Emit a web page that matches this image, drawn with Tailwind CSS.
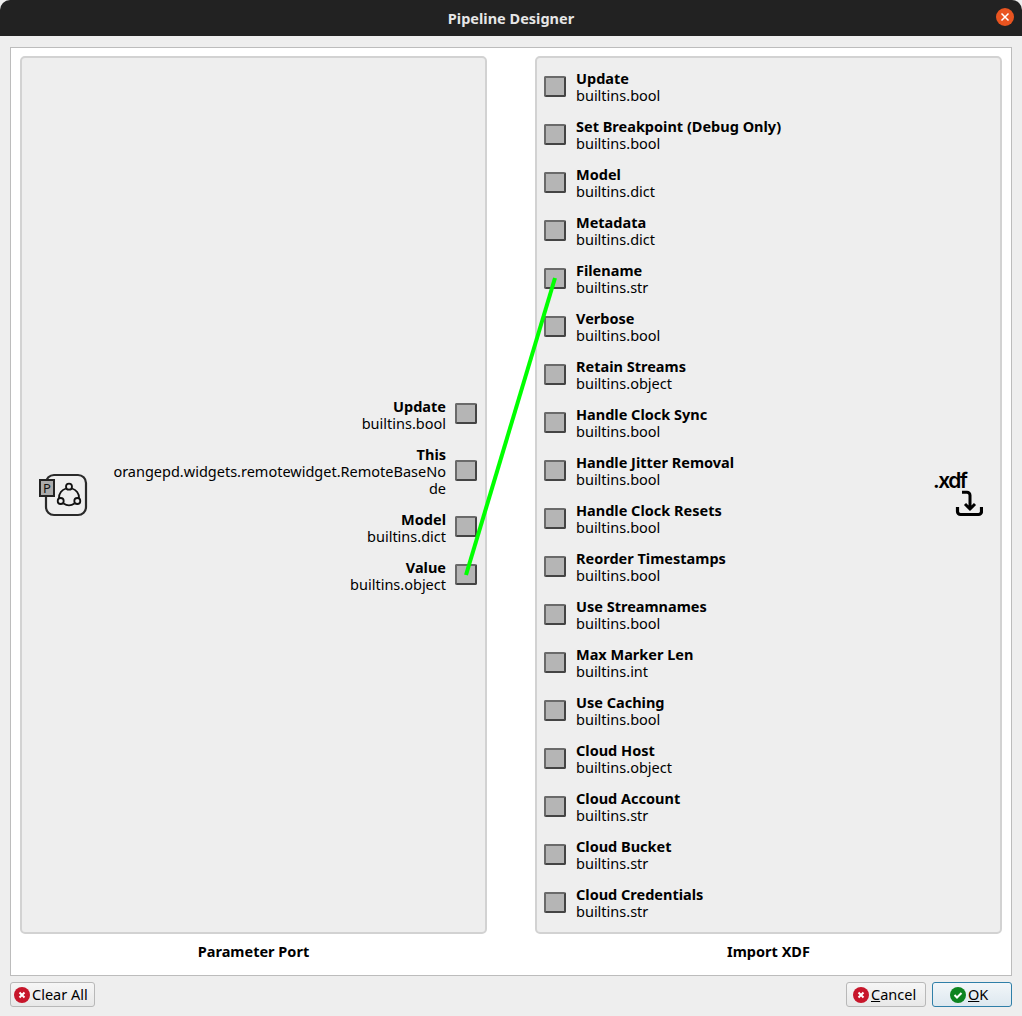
<!DOCTYPE html>
<html lang="en">
<head>
    <meta charset="UTF-8">
    <title>Pipeline Designer</title>
    <script src="https://cdn.jsdelivr.net/npm/@tailwindcss/browser@4"></script>
</head>
<body class="h-[1016px] w-[1022px] overflow-hidden bg-[#eeeeee] font-['Noto_Sans',sans-serif] text-[14.5px] leading-[17px] text-black">

    <!-- Title bar -->
    <header class="h-9 bg-[#222222] rounded-t-[10px] flex items-center justify-center relative">
        <span class="text-[#e6e6e6] font-bold text-[14.5px]">Pipeline Designer</span>
        <span class="absolute left-[996px] top-[8px] w-[18px] h-[18px] rounded-full bg-[#e95420] flex items-center justify-center">
            <svg width="10" height="10" viewBox="0 0 10 10"><path d="M1.500 1.500l7 7M8.500 1.500l-7 7" stroke="#fff" stroke-width="1.500"/></svg>
        </span>
    </header>

    <!-- Main frame -->
    <main class="relative ml-[10px] mt-[11px] w-[1002px] h-[929px] bg-white border border-[#bcbcbc] pt-[8px] pl-[9px]">
        <div class="flex gap-[48px]">

            <!-- Left node -->
            <section class="w-[467px]">
                <div class="h-[878px] bg-[#eeeeee] border-2 border-[#d2d2d2] rounded-[5px] flex items-center pl-[18px] pr-[8px]">
                    <svg width="48" height="44" viewBox="0 0 48 44" class="shrink-0 overflow-visible">
                        <rect x="6" y="2" width="40" height="40" rx="8" fill="none" stroke="#2a2a2a" stroke-width="2.200"/>
                        <path d="M26 15.500a9.500 9.500 0 0 0-7 9.500M32 15.500a9.500 9.500 0 0 1 7 9.500M23.500 30.500a9.500 9.500 0 0 0 11 0" fill="none" stroke="#111" stroke-width="1.800"/>
                        <circle cx="29" cy="13.700" r="3" fill="#eee" stroke="#111" stroke-width="1.800"/>
                        <circle cx="20.700" cy="28" r="3" fill="#eee" stroke="#111" stroke-width="1.800"/>
                        <circle cx="37.300" cy="28" r="3" fill="#eee" stroke="#111" stroke-width="1.800"/>
                        <rect x="0" y="7" width="14" height="16" fill="#aaaaaa" stroke="#222" stroke-width="2"/>
                        <text x="7" y="20" text-anchor="middle" font-size="13" fill="#111">P</text>
                    </svg>
                    <div class="flex-1 flex flex-col items-end">
                        <div class="h-12 flex items-center gap-[9px]">
                            <div class="text-right"><div class="font-bold">Update</div><div>builtins.bool</div></div>
                            <div class="w-[22px] h-[21px] mb-[2px] bg-[#b5b5b5] border-2 border-[#6a6a6a] border-b-[#444] border-r-[#444] rounded-[2px]"></div>
                        </div>
                        <div class="h-[65px] flex items-center gap-[9px]">
                            <div class="text-right"><div class="font-bold">This</div><div class="whitespace-nowrap">orangepd.widgets.remotewidget.RemoteBaseNo<br>de</div></div>
                            <div class="w-[22px] h-[21px] mb-[2px] bg-[#b5b5b5] border-2 border-[#6a6a6a] border-b-[#444] border-r-[#444] rounded-[2px]"></div>
                        </div>
                        <div class="h-12 flex items-center gap-[9px]">
                            <div class="text-right"><div class="font-bold">Model</div><div>builtins.dict</div></div>
                            <div class="w-[22px] h-[21px] mb-[2px] bg-[#b5b5b5] border-2 border-[#6a6a6a] border-b-[#444] border-r-[#444] rounded-[2px]"></div>
                        </div>
                        <div class="h-12 flex items-center gap-[9px]">
                            <div class="text-right"><div class="font-bold">Value</div><div>builtins.object</div></div>
                            <div class="w-[22px] h-[21px] mb-[2px] bg-[#b5b5b5] border-2 border-[#6a6a6a] border-b-[#444] border-r-[#444] rounded-[2px]"></div>
                        </div>
                    </div>
                </div>
                <div class="text-center font-bold mt-[9px]">Parameter Port</div>
            </section>

            <!-- Right node -->
            <section class="w-[467px]">
                <div class="h-[878px] bg-[#eeeeee] border-2 border-[#d2d2d2] rounded-[5px] flex items-center pl-[7px] pr-[17px]">
                    <div class="flex-1 flex flex-col">
                        <div class="h-12 flex items-center gap-[10px]">
                            <div class="w-[22px] h-[21px] mb-[2px] bg-[#b5b5b5] border-2 border-[#6a6a6a] border-b-[#444] border-r-[#444] rounded-[2px]"></div>
                            <div><div class="font-bold">Update</div><div>builtins.bool</div></div>
                        </div>
                        <div class="h-12 flex items-center gap-[10px]">
                            <div class="w-[22px] h-[21px] mb-[2px] bg-[#b5b5b5] border-2 border-[#6a6a6a] border-b-[#444] border-r-[#444] rounded-[2px]"></div>
                            <div><div class="font-bold">Set Breakpoint (Debug Only)</div><div>builtins.bool</div></div>
                        </div>
                        <div class="h-12 flex items-center gap-[10px]">
                            <div class="w-[22px] h-[21px] mb-[2px] bg-[#b5b5b5] border-2 border-[#6a6a6a] border-b-[#444] border-r-[#444] rounded-[2px]"></div>
                            <div><div class="font-bold">Model</div><div>builtins.dict</div></div>
                        </div>
                        <div class="h-12 flex items-center gap-[10px]">
                            <div class="w-[22px] h-[21px] mb-[2px] bg-[#b5b5b5] border-2 border-[#6a6a6a] border-b-[#444] border-r-[#444] rounded-[2px]"></div>
                            <div><div class="font-bold">Metadata</div><div>builtins.dict</div></div>
                        </div>
                        <div class="h-12 flex items-center gap-[10px]">
                            <div class="w-[22px] h-[21px] mb-[2px] bg-[#b5b5b5] border-2 border-[#6a6a6a] border-b-[#444] border-r-[#444] rounded-[2px]"></div>
                            <div><div class="font-bold">Filename</div><div>builtins.str</div></div>
                        </div>
                        <div class="h-12 flex items-center gap-[10px]">
                            <div class="w-[22px] h-[21px] mb-[2px] bg-[#b5b5b5] border-2 border-[#6a6a6a] border-b-[#444] border-r-[#444] rounded-[2px]"></div>
                            <div><div class="font-bold">Verbose</div><div>builtins.bool</div></div>
                        </div>
                        <div class="h-12 flex items-center gap-[10px]">
                            <div class="w-[22px] h-[21px] mb-[2px] bg-[#b5b5b5] border-2 border-[#6a6a6a] border-b-[#444] border-r-[#444] rounded-[2px]"></div>
                            <div><div class="font-bold">Retain Streams</div><div>builtins.object</div></div>
                        </div>
                        <div class="h-12 flex items-center gap-[10px]">
                            <div class="w-[22px] h-[21px] mb-[2px] bg-[#b5b5b5] border-2 border-[#6a6a6a] border-b-[#444] border-r-[#444] rounded-[2px]"></div>
                            <div><div class="font-bold">Handle Clock Sync</div><div>builtins.bool</div></div>
                        </div>
                        <div class="h-12 flex items-center gap-[10px]">
                            <div class="w-[22px] h-[21px] mb-[2px] bg-[#b5b5b5] border-2 border-[#6a6a6a] border-b-[#444] border-r-[#444] rounded-[2px]"></div>
                            <div><div class="font-bold">Handle Jitter Removal</div><div>builtins.bool</div></div>
                        </div>
                        <div class="h-12 flex items-center gap-[10px]">
                            <div class="w-[22px] h-[21px] mb-[2px] bg-[#b5b5b5] border-2 border-[#6a6a6a] border-b-[#444] border-r-[#444] rounded-[2px]"></div>
                            <div><div class="font-bold">Handle Clock Resets</div><div>builtins.bool</div></div>
                        </div>
                        <div class="h-12 flex items-center gap-[10px]">
                            <div class="w-[22px] h-[21px] mb-[2px] bg-[#b5b5b5] border-2 border-[#6a6a6a] border-b-[#444] border-r-[#444] rounded-[2px]"></div>
                            <div><div class="font-bold">Reorder Timestamps</div><div>builtins.bool</div></div>
                        </div>
                        <div class="h-12 flex items-center gap-[10px]">
                            <div class="w-[22px] h-[21px] mb-[2px] bg-[#b5b5b5] border-2 border-[#6a6a6a] border-b-[#444] border-r-[#444] rounded-[2px]"></div>
                            <div><div class="font-bold">Use Streamnames</div><div>builtins.bool</div></div>
                        </div>
                        <div class="h-12 flex items-center gap-[10px]">
                            <div class="w-[22px] h-[21px] mb-[2px] bg-[#b5b5b5] border-2 border-[#6a6a6a] border-b-[#444] border-r-[#444] rounded-[2px]"></div>
                            <div><div class="font-bold">Max Marker Len</div><div>builtins.int</div></div>
                        </div>
                        <div class="h-12 flex items-center gap-[10px]">
                            <div class="w-[22px] h-[21px] mb-[2px] bg-[#b5b5b5] border-2 border-[#6a6a6a] border-b-[#444] border-r-[#444] rounded-[2px]"></div>
                            <div><div class="font-bold">Use Caching</div><div>builtins.bool</div></div>
                        </div>
                        <div class="h-12 flex items-center gap-[10px]">
                            <div class="w-[22px] h-[21px] mb-[2px] bg-[#b5b5b5] border-2 border-[#6a6a6a] border-b-[#444] border-r-[#444] rounded-[2px]"></div>
                            <div><div class="font-bold">Cloud Host</div><div>builtins.object</div></div>
                        </div>
                        <div class="h-12 flex items-center gap-[10px]">
                            <div class="w-[22px] h-[21px] mb-[2px] bg-[#b5b5b5] border-2 border-[#6a6a6a] border-b-[#444] border-r-[#444] rounded-[2px]"></div>
                            <div><div class="font-bold">Cloud Account</div><div>builtins.str</div></div>
                        </div>
                        <div class="h-12 flex items-center gap-[10px]">
                            <div class="w-[22px] h-[21px] mb-[2px] bg-[#b5b5b5] border-2 border-[#6a6a6a] border-b-[#444] border-r-[#444] rounded-[2px]"></div>
                            <div><div class="font-bold">Cloud Bucket</div><div>builtins.str</div></div>
                        </div>
                        <div class="h-12 flex items-center gap-[10px]">
                            <div class="w-[22px] h-[21px] mb-[2px] bg-[#b5b5b5] border-2 border-[#6a6a6a] border-b-[#444] border-r-[#444] rounded-[2px]"></div>
                            <div><div class="font-bold">Cloud Credentials</div><div>builtins.str</div></div>
                        </div>
                    </div>
                    <!-- .xdf icon -->
                    <div class="w-[50px] h-[48px] shrink-0 flex flex-col items-start">
                        <span class="font-['Inter',sans-serif] font-semibold text-[21px] leading-[20px] tracking-[-1.5px] text-black">.xdf</span>
                        <svg width="50" height="28" viewBox="0 0 50 28" class="-mt-[1px]">
                            <path d="M29 2.200h5a3 3 0 0 1 3 3V19M32 14l5 5 5-5" fill="none" stroke="#000" stroke-width="3"/>
                            <path d="M24.500 17v4.500a3 3 0 0 0 3 3h18a3 3 0 0 0 3-3V17" fill="none" stroke="#000" stroke-width="3.200"/>
                        </svg>
                    </div>
                </div>
                <div class="text-center font-bold mt-[9px]">Import XDF</div>
            </section>
        </div>

        <!-- Wire between ports -->
        <svg class="absolute left-0 top-0 pointer-events-none" width="1000" height="927">
            <line x1="455" y1="527" x2="544" y2="230" stroke="#00ff00" stroke-width="4"/>
        </svg>
    </main>

    <!-- Button row -->
    <footer class="flex justify-between px-[10px] mt-[6px]">
        <button class="h-[25px] w-[85px] pl-[3px] flex items-center gap-[2px] rounded-[3px] border border-[#b8b8b8] bg-gradient-to-b from-[#f6f6f6] to-[#e8e8e8]">
            <svg width="16" height="16" viewBox="0 0 16 16"><circle cx="8" cy="8" r="8" fill="#c7162b"/><path d="M5.500 5.500l5 5M10.500 5.500l-5 5" stroke="#fff" stroke-width="2"/></svg>
            <span>Clear All</span>
        </button>
        <div class="flex gap-[6px]">
            <button class="h-[25px] w-[80px] pl-[6px] flex items-center gap-[2px] rounded-[3px] border border-[#b8b8b8] bg-gradient-to-b from-[#f6f6f6] to-[#e8e8e8]">
                <svg width="16" height="16" viewBox="0 0 16 16"><circle cx="8" cy="8" r="8" fill="#c7162b"/><path d="M5.500 5.500l5 5M10.500 5.500l-5 5" stroke="#fff" stroke-width="2"/></svg>
                <span><span class="underline">C</span>ancel</span>
            </button>
            <button class="h-[25px] w-[80px] pl-[17px] flex items-center gap-[2px] rounded-[3px] border border-[#2f7fa8] bg-gradient-to-b from-[#f2f6f9] to-[#dde8ef]">
                <svg width="16" height="16" viewBox="0 0 16 16"><circle cx="8" cy="8" r="8" fill="#0e8420"/><path d="M4.500 8l2.500 2.500 4.500-4.500" fill="none" stroke="#fff" stroke-width="2"/></svg>
                <span><span class="underline">O</span>K</span>
            </button>
        </div>
    </footer>

</body>
</html>
